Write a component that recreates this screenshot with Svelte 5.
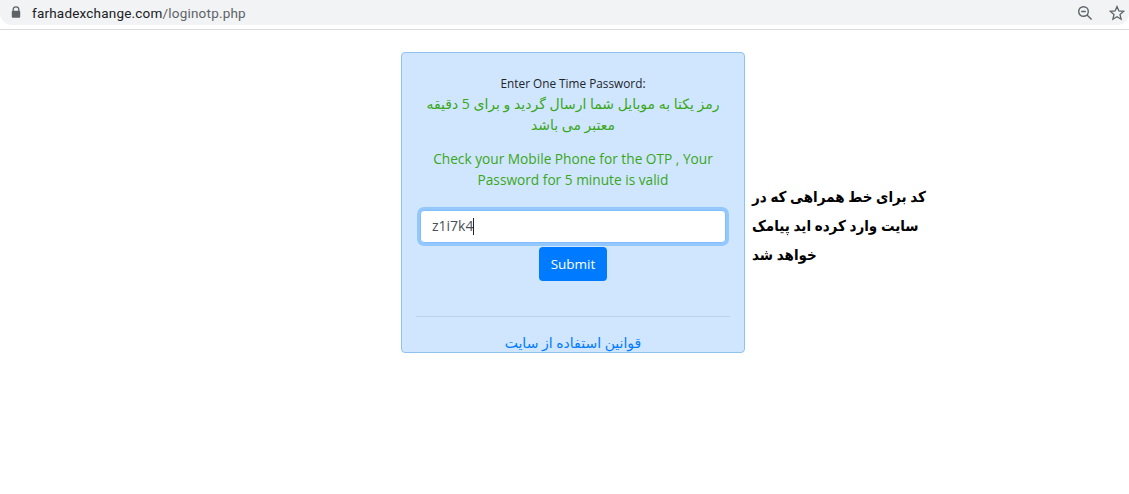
<script>
  let code = 'z1i7k4';
</script>

<div class="toolbar">
  <div class="omnibox">
    <svg class="lock" width="10" height="13" viewBox="0 0 10 13">
      <path d="M2.2 5V3.6a2.8 2.8 0 0 1 5.6 0V5" fill="none" stroke="#5f6368" stroke-width="1.3" />
      <rect x="0.8" y="4.8" width="8.4" height="7" rx="1" fill="#5f6368" />
    </svg>
    <span class="url">farhadexchange.com<span class="path">/loginotp.php</span></span>
    <div class="actions">
      <svg width="16" height="16" viewBox="0 0 16 16" fill="none" stroke="#5f6368" stroke-width="1.4">
        <circle cx="6.5" cy="6.5" r="4.8" />
        <path d="M4.2 6.5h4.6M10 10l4.6 4.6" />
      </svg>
      <svg width="16" height="16" viewBox="0 0 16 16" fill="none" stroke="#5f6368" stroke-width="1.3">
        <path d="M8 1.6l1.9 4.4 4.7.4-3.6 3.1 1.1 4.7L8 11.7l-4.1 2.5L5 9.5 1.4 6.4l4.7-.4z" />
      </svg>
    </div>
  </div>
</div>

<main class="page">
  <section class="card">
    <p class="prompt">Enter One Time Password:</p>
    <p class="note fa" dir="rtl">رمز یکتا به موبایل شما ارسال گردید و برای 5 دقیقه معتبر می باشد</p>
    <p class="note en">Check your Mobile Phone for the OTP , Your Password for 5 minute is valid</p>
    <div class="field">
      <input type="text" value={code} />
      <span class="value">{code}<i class="caret"></i></span>
    </div>
    <button class="submit">Submit</button>
    <hr />
    <a class="terms" href="#terms" dir="rtl">قوانین استفاده از سایت</a>
  </section>
  <p class="aside" dir="rtl">کد برای خط همراهی که در سایت وارد کرده اید پیامک خواهد شد</p>
</main>

<style>
  :global(body) {
    margin: 0;
    background: #fff;
    font-family: "Open Sans", "Noto Sans", "DejaVu Sans", sans-serif;
  }

  .toolbar {
    height: 29px;
    border-bottom: 1px solid #dadce0;
    box-sizing: content-box;
  }

  .omnibox {
    height: 25px;
    background: #f1f3f4;
    border-radius: 0 0 12px 12px;
    display: flex;
    align-items: center;
    padding: 0 4px 0 11px;
  }

  .lock {
    margin-right: 11px;
  }

  .url {
    font-size: 13.5px;
    color: #202124;
    font-family: Roboto, sans-serif;
    letter-spacing: 0.2px;
  }

  .path {
    color: #5f6368;
  }

  .actions {
    margin-left: auto;
    display: flex;
    gap: 16px;
  }

  .page {
    display: flex;
    align-items: flex-start;
    padding: 22px 0 0 401px;
  }

  .card {
    width: 344px;
    height: 301px;
    box-sizing: border-box;
    background: #d0e6ff;
    border: 1px solid #8fc1f3;
    border-radius: 4px;
    padding: 21px 14px 0;
    text-align: center;
    overflow: hidden;
  }

  .card p {
    margin: 0;
  }

  .prompt {
    font-size: 11.8px;
    line-height: 19px;
    color: #212529;
  }

  .note {
    font-size: 13.7px;
    line-height: 21px;
    color: #3aa71a;
  }

  .note.fa {
    font-size: 14px;
  }

  .note.en {
    margin-top: 13px;
  }

  .field {
    position: relative;
    margin: 20px 4px 4px;
  }

  input {
    display: block;
    width: 100%;
    height: 33px;
    box-sizing: border-box;
    border: 1px solid #80bdff;
    border-radius: 4px;
    box-shadow: 0 0 0 3px #94c8fd;
    color: transparent;
    outline: none;
  }

  .value {
    position: absolute;
    left: 12px;
    top: 7px;
    font-size: 14px;
    line-height: 18px;
    color: #495057;
  }

  .caret {
    display: inline-block;
    width: 1px;
    height: 17px;
    background: #222;
    vertical-align: -4px;
  }

  .submit {
    display: block;
    margin: 0 auto;
    width: 68px;
    height: 34px;
    background: #007bff;
    color: #fff;
    border: 0;
    border-radius: 4px;
    font-family: inherit;
    font-size: 13.5px;
  }

  hr {
    margin: 35px 0 14px;
    border: 0;
    border-top: 1px solid #b9d3ee;
  }

  .terms {
    font-size: 14px;
    line-height: 21px;
    color: #007bff;
    text-decoration: none;
  }

  .aside {
    width: 174px;
    margin: 131px 0 0 7px;
    font-family: "DejaVu Sans Condensed", "DejaVu Sans", sans-serif;
    font-stretch: condensed;
    font-size: 15px;
    font-weight: 700;
    word-spacing: -1px;
    line-height: 29px;
    color: #000;
    text-align: left;
  }
</style>
